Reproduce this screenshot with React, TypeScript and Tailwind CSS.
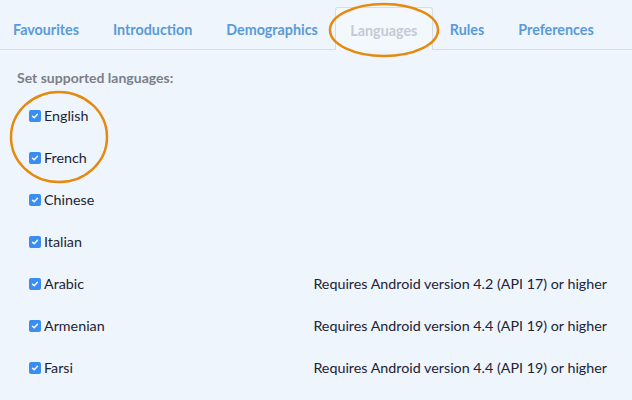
import React from "react";

const tabs = ["Favourites", "Introduction", "Demographics", "Languages", "Rules", "Preferences"];
const langs: [string, string][] = [
  ["English", ""],
  ["French", ""],
  ["Chinese", ""],
  ["Italian", ""],
  ["Arabic", "Requires Android version 4.2 (API 17) or higher"],
  ["Armenian", "Requires Android version 4.4 (API 19) or higher"],
  ["Farsi", "Requires Android version 4.4 (API 19) or higher"],
];

function Check() {
  return (
    <span className="flex h-[12px] w-[12px] items-center justify-center rounded-[2px] bg-[#3a8ef2]">
      <svg width="8" height="8" viewBox="0 0 8 8">
        <path d="M1.5 4.2 L3.2 5.8 L6.5 2.2" fill="none" stroke="white" strokeWidth="1.4" strokeLinecap="round" strokeLinejoin="round" />
      </svg>
    </span>
  );
}

export default function App() {
  return (
    <div className="relative h-[400px] w-[632px] overflow-hidden bg-[#eef5fd]" style={{ fontFamily: "Lato, 'Open Sans', sans-serif" }}>
      <div className="flex h-[50px] items-end border-b border-[#d9dde2]">
        <div className="-ml-[4px] flex h-[42px] items-stretch">
          {tabs.map((t) => {
            const active = t === "Languages";
            return (
              <div
                key={t}
                className={
                  active
                    ? "relative mb-[-1px] flex items-center rounded-t-[3px] border border-b-0 border-[#d9dde2] bg-[#f3f8fd] px-[14.5px] pt-[3px] text-[14.3px] font-bold text-[#c4cad3]"
                    : "flex items-center px-[17px] pt-[3px] text-[14.3px] font-bold text-[#5a9ad8]"
                }
              >
                {t}
              </div>
            );
          })}
        </div>
      </div>
      <div className="px-[17px] pt-[18px]">
        <div className="text-[14px] leading-[20px] font-bold text-[#7a7f8a]">Set supported languages:</div>
        <div className="mt-[7px] flex flex-col">
          {langs.map(([l, r]) => (
            <div key={l} className="flex h-[42px] items-center pl-[12px] text-[14.3px] text-[#1d2333]">
              <Check />
              <span className="ml-[3px] flex-1">{l}</span>
              {r && <span className="mr-[8px]">{r}</span>}
            </div>
          ))}
        </div>
      </div>
      <svg className="pointer-events-none absolute left-0 top-0" width="632" height="400">
        <ellipse cx="384" cy="30" rx="54" ry="26" fill="none" stroke="#e58a0f" strokeWidth="2.5" />
        <ellipse cx="59" cy="137" rx="48" ry="45" fill="none" stroke="#e58a0f" strokeWidth="2.5" />
      </svg>
    </div>
  );
}
